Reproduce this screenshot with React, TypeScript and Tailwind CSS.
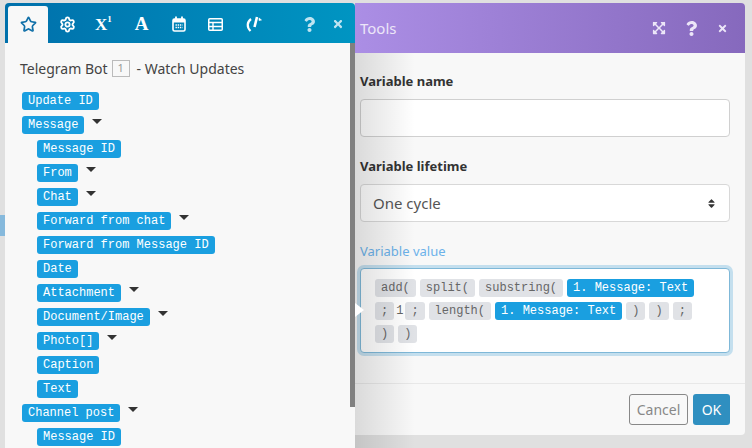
import React from "react";
import { Settings, Star } from "lucide-react";
import { FaExpandArrowsAlt, FaQuestion, FaSort, FaTimes } from "react-icons/fa";

type Item = { label: string; caret?: boolean; nested?: boolean };

const items: Item[] = [
  { label: "Update ID" },
  { label: "Message", caret: true },
  { label: "Message ID", nested: true },
  { label: "From", caret: true, nested: true },
  { label: "Chat", caret: true, nested: true },
  { label: "Forward from chat", caret: true, nested: true },
  { label: "Forward from Message ID", nested: true },
  { label: "Date", nested: true },
  { label: "Attachment", caret: true, nested: true },
  { label: "Document/Image", caret: true, nested: true },
  { label: "Photo[]", caret: true, nested: true },
  { label: "Caption", nested: true },
  { label: "Text", nested: true },
  { label: "Channel post", caret: true },
  { label: "Message ID", nested: true },
];

const mono = "font-['Liberation_Mono',monospace] text-[12px] leading-[18px]";

function Chip({ label, fn }: { label: string; fn?: boolean }) {
  return (
    <span
      className={`${mono} inline-block h-[18px] rounded-[3px] px-[6px] whitespace-pre ${
        fn ? "bg-[#e0e2e6] text-[#666]" : "bg-[#1a9fe0] text-white"
      }`}
    >
      {label}
    </span>
  );
}

function CalendarIcon() {
  return (
    <svg width="14" height="16" viewBox="0 0 14 16" fill="none">
      <rect x="1" y="3" width="12" height="12" rx="1.5" stroke="white" strokeWidth="1.6" />
      <rect x="1" y="3" width="12" height="3.5" fill="white" />
      <path d="M4 0.5V3M10 0.5V3" stroke="white" strokeWidth="1.8" />
      <path d="M3.5 9H10.5M3.5 11.5H10.5" stroke="white" strokeWidth="1.5" strokeDasharray="1.4 0.8" />
    </svg>
  );
}

function TableIcon() {
  return (
    <svg width="15" height="13" viewBox="0 0 15 13" fill="none" stroke="white">
      <rect x="0.75" y="0.75" width="13.5" height="11.5" rx="1" strokeWidth="1.5" />
      <path d="M1 4.5H14M1 8.5H14M5 4.5V12" strokeWidth="1.4" />
    </svg>
  );
}

function GaugeIcon() {
  return (
    <svg width="16" height="16" viewBox="0 0 16 16" fill="none" stroke="white">
      <path d="M5 3 C1 6 0.5 11 4.5 15" strokeWidth="2.2" />
      <path d="M11 1 L8.5 11" strokeWidth="2.6" />
      <path d="M13 2 L15.5 4 L13 4.5 Z" fill="white" strokeWidth="0.6" />
    </svg>
  );
}

function LeftPanel() {
  return (
    <div className="relative z-10 flex h-[445px] w-[350px] shrink-0 flex-col">
      <div className="flex h-[40px] shrink-0 items-end rounded-t-[4px] bg-gradient-to-r from-[#0070ab] to-[#0095c2] pl-[3px] text-white">
        <div className="flex h-[37px] w-[40px] items-center justify-center rounded-t-[3px] bg-[#f8f8f8] pb-[1px]">
          <Star size={17} strokeWidth={2.4} className="text-[#0f6fa8]" />
        </div>
        <div className="flex h-[37px] items-center pl-[11px] pb-[1px]">
          <Settings size={17} strokeWidth={2.6} />
          <span className="ml-[19px] flex items-start font-['Liberation_Serif',serif] text-[17px] leading-none font-bold">
            X<span className="mt-[-1px] text-[9px] leading-none">1</span>
          </span>
          <span className="ml-[23px] font-['Liberation_Serif',serif] text-[19px] font-bold">A</span>
          <span className="ml-[23px]">
            <CalendarIcon />
          </span>
          <span className="ml-[22px]">
            <TableIcon />
          </span>
          <span className="ml-[23px]">
            <GaugeIcon />
          </span>
        </div>
        <div className="ml-auto flex h-[37px] items-center gap-[15px] pr-[11px] pb-[1px] text-[#bfe4f1]">
          <FaQuestion size={15} />
          <FaTimes size={12} />
        </div>
      </div>
      <div className="flex min-h-0 flex-1 bg-[#f8f8f8]">
        <div className="min-w-0 flex-1 overflow-hidden pt-[17px] pl-[15px]">
          <div className="flex h-[17px] items-center font-['Noto_Sans',sans-serif] text-[14px] text-[#444]">
            Telegram Bot
            <span className="mx-[4px] flex h-[17px] w-[18px] items-center justify-center border border-[#bbb] text-[11px] text-[#999]">
              1
            </span>
            <span className="ml-[3px]">- Watch Updates</span>
          </div>
          <div className="mt-[15px] flex flex-col gap-[6px] pl-[2px]">
            {items.map((item, i) => (
              <div key={i} className={`flex shrink-0 ${item.nested ? "pl-[15px]" : ""}`}>
                <Chip label={item.label} />
                {item.caret && (
                  <span className="mt-[3px] ml-[8px] h-0 w-0 border-x-[5px] border-t-[5px] border-x-transparent border-t-[#333]" />
                )}
              </div>
            ))}
          </div>
        </div>
        <div className="w-[5px] shrink-0">
          <div className="h-[364px] bg-[#808080]" />
        </div>
      </div>
    </div>
  );
}

function Field({ label, children }: { label: string; children: React.ReactNode }) {
  return (
    <div>
      <div className="mb-[9px] h-[18px] font-['Noto_Sans',sans-serif] text-[13px] leading-[18px] font-bold text-[#333]">
        {label}
      </div>
      {children}
    </div>
  );
}

function RightPanel() {
  return (
    <div className="relative h-[432px] w-[390px] shrink-0 rounded-r-[4px] bg-[#f8f8f8]">
      <div className="flex h-[50px] items-center rounded-tr-[4px] bg-gradient-to-r from-[#ab8ee5] to-[#8669bd] pr-[17px] pl-[5px] text-[#ece6f8]">
        <span className="font-['Noto_Sans',sans-serif] text-[15px]">Tools</span>
        <div className="ml-auto flex items-center gap-[18px]">
          <FaExpandArrowsAlt size={14} />
          <FaQuestion size={15} />
          <FaTimes size={11} />
        </div>
      </div>
      <div className="flex flex-col gap-[20px] px-[5px] pt-[19px] pr-[15px]">
        <Field label="Variable name">
          <div className="h-[38px] rounded-[4px] border border-[#d0d0d0] bg-white" />
        </Field>
        <Field label="Variable lifetime">
          <div className="flex h-[38px] items-center justify-between rounded-[4px] border border-[#d8d8d8] bg-white pr-[12px] pl-[12px] font-['Noto_Sans',sans-serif] text-[15px] text-[#555]">
            One cycle
            <FaSort size={11} className="text-[#333]" />
          </div>
        </Field>
        <div>
          <div className="mb-[8px] h-[18px] font-['Noto_Sans',sans-serif] text-[13px] leading-[18px] text-[#6cb2ea]">
            Variable value
          </div>
          <div className="h-[85px] rounded-[4px] border border-[#7fb8d8] bg-white py-[10px] pr-[20px] pl-[14px] ring-[3px] ring-[#c4dfee]">
            <div className="flex flex-wrap gap-x-[4px] gap-y-[5px]">
              <Chip fn label="add(" />
              <Chip fn label="split(" />
              <Chip fn label="substring(" />
              <Chip label="1. Message: Text" />
              <Chip fn label=";" />
              <span className={`${mono} mx-[-2px] text-[#666]`}>1</span>
              <Chip fn label=";" />
              <Chip fn label="length(" />
              <Chip label="1. Message: Text" />
              <Chip fn label=")" />
              <Chip fn label=")" />
              <Chip fn label=";" />
              <Chip fn label=")" />
              <Chip fn label=")" />
            </div>
          </div>
        </div>
      </div>
      <div className="mt-[30px] flex h-[52px] justify-end gap-[5px] border-t border-[#e8e8e8] pt-[10px] pr-[15px] font-['Noto_Sans',sans-serif] text-[14px]">
        <div className="flex h-[31px] w-[59px] items-center justify-center rounded-[3px] border border-[#888] text-[#888]">
          Cancel
        </div>
        <div className="flex h-[31px] w-[37px] items-center justify-center rounded-[3px] bg-[#2f8fc0] text-white">
          OK
        </div>
      </div>
      {/* shadow cast by the left panel */}
      <div className="pointer-events-none absolute top-[50px] left-0 h-[395px] w-[60px] bg-gradient-to-r from-[rgba(0,0,0,0.12)] to-transparent" />
      {/* connector arrow */}
      <div className="absolute top-[300px] left-0 h-0 w-0 border-y-[7px] border-l-[9px] border-y-transparent border-l-white" />
    </div>
  );
}

export default function App() {
  return (
    <div className="relative flex h-[448px] w-[752px] overflow-hidden bg-[#e0e0e0] pt-[3px] pl-[5px]">
      <div className="absolute top-[215px] left-0 h-[21px] w-[5px] bg-[#86b9dc]" />
      <LeftPanel />
      <RightPanel />
    </div>
  );
}
